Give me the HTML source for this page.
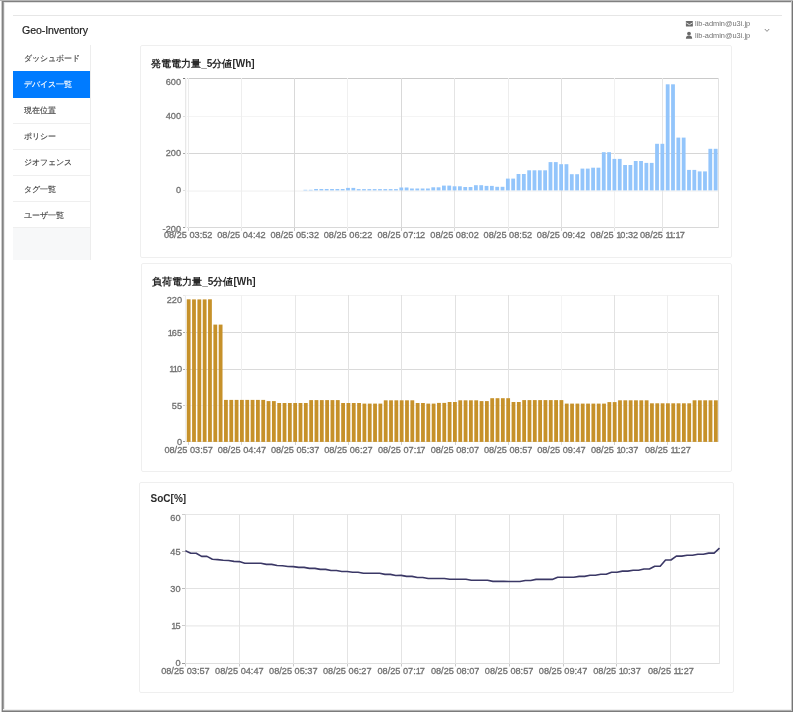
<!DOCTYPE html>
<html><head><meta charset="utf-8">
<style>
html,body{margin:0;padding:0;background:#fff;}
body{width:793px;height:712px;position:relative;overflow:hidden;font-family:"Liberation Sans", sans-serif;}
.gs{will-change:transform;}
.abs{position:absolute;}
.frame{position:absolute;left:1.5px;top:0;width:787.5px;height:708px;border:2px solid #7f7f7f;border-top-color:#8f8f8f;}
.hline{position:absolute;left:13px;top:15px;width:769px;height:1px;background:#e6e6e6;}
.brand{position:absolute;left:22px;top:24.2px;font-size:10.6px;color:#222;white-space:nowrap;letter-spacing:-0.1px;-webkit-text-stroke-width:0.2px;}
.side{position:absolute;left:13px;top:45px;width:77px;height:214.5px;border-right:1px solid #ededed;box-sizing:content-box;}
.sep{position:absolute;left:13px;width:77px;height:1px;background:#efefef;}
.act{position:absolute;left:13px;top:71px;width:77px;height:26.6px;background:#007bff;}
.fill{position:absolute;left:13px;top:228px;width:77px;height:31.5px;background:#f7f8f9;}
.it{position:absolute;left:24px;font-size:7.8px;color:#444;white-space:nowrap;line-height:10px;-webkit-text-stroke-width:0.15px;}
.card{position:absolute;border:1px solid #efefef;border-radius:2px;box-sizing:border-box;}
.title{position:absolute;font-size:10px;font-weight:bold;color:#2a2a2a;white-space:nowrap;letter-spacing:0.03px;}
.mail{position:absolute;left:695px;font-size:7.4px;color:#707070;white-space:nowrap;}
svg{position:absolute;left:0;top:0;}
svg text{font-family:"Liberation Sans", sans-serif;stroke:#707070;stroke-width:0.3px;}
</style></head><body>
<div class="gs" style="position:absolute;left:0;top:0;width:793px;height:712px;">
<div class="abs" style="left:0;top:0;width:793px;height:1px;background:#b5b5b5"></div>
<div class="abs" style="left:1px;top:1px;width:792px;height:1px;background:#808080"></div>
<div class="abs" style="left:3px;top:2px;width:788px;height:1px;background:#e2e2e2"></div>
<div class="abs" style="left:1px;top:1px;width:1px;height:711px;background:#cccccc"></div>
<div class="abs" style="left:2px;top:1px;width:1px;height:711px;background:#828282"></div>
<div class="abs" style="left:3px;top:2px;width:1px;height:709px;background:#a0a0a0"></div>
<div class="abs" style="left:4px;top:3px;width:1px;height:707px;background:#ececec"></div>
<div class="abs" style="left:791px;top:1px;width:1px;height:711px;background:#c4c4c4"></div>
<div class="abs" style="left:792px;top:1px;width:1px;height:711px;background:#767676"></div>
<div class="abs" style="left:3px;top:709px;width:788px;height:1px;background:#f0f0f0"></div>
<div class="abs" style="left:3px;top:710px;width:788px;height:1px;background:#b0b0b0"></div>
<div class="abs" style="left:2px;top:711px;width:791px;height:1px;background:#7c7c7c"></div>
<div class="hline"></div>
<div class="brand">Geo-Inventory</div>

<div class="mail" style="top:19.1px">lib-admin@u3i.jp</div>
<div class="mail" style="top:31.1px">lib-admin@u3i.jp</div>
<svg width="793" height="712" style="pointer-events:none">
<rect x="685.9" y="21" width="7" height="5.6" rx="0.6" fill="#6a6a6a"/>
<path d="M686.3 22.9 L689.4 24.7 L692.5 22.9" stroke="#fff" stroke-width="0.8" fill="none"/>
<circle cx="689" cy="33.6" r="1.9" fill="#6a6a6a"/>
<path d="M685.9 38.8 Q685.9 35.6 689 35.6 Q692.2 35.6 692.2 38.8 Z" fill="#6a6a6a"/>
<path d="M764.8 29 L767 31.4 L769.2 29" stroke="#8a8a8a" stroke-width="1" fill="none"/>
</svg>

<div class="side"></div>
<div class="sep" style="top:97.1px"></div>
<div class="sep" style="top:122.6px"></div>
<div class="sep" style="top:149.3px"></div>
<div class="sep" style="top:174.8px"></div>
<div class="sep" style="top:200.8px"></div>
<div class="sep" style="top:227.1px"></div>
<div class="act"></div>
<div class="fill"></div>
<div class="it" style="top:54px">ダッシュボード</div>
<div class="it" style="top:80.1px;color:#fff">デバイス一覧</div>
<div class="it" style="top:106.2px">現在位置</div>
<div class="it" style="top:132.3px">ポリシー</div>
<div class="it" style="top:158.4px">ジオフェンス</div>
<div class="it" style="top:184.5px">タグ一覧</div>
<div class="it" style="top:210.6px">ユーザ一覧</div>

<div class="card" style="left:140px;top:45px;width:592px;height:213px"></div>
<div class="card" style="left:141px;top:263px;width:591px;height:208.5px"></div>
<div class="card" style="left:139px;top:482px;width:595px;height:211px"></div>
<div class="title" style="left:151px;top:56.6px">発電電力量_5分値[Wh]</div>
<div class="title" style="left:152px;top:274.8px">負荷電力量_5分値[Wh]</div>
<div class="title" style="left:150.5px;top:493px">SoC[%]</div>

<svg width="793" height="712">
<rect x="185" y="78" width="534" height="1" fill="#cacaca"/>
<rect x="185" y="116" width="534" height="1" fill="#f4f4f4"/>
<rect x="185" y="153" width="534" height="1" fill="#d6d6d6"/>
<rect x="185" y="190" width="534" height="1" fill="#f8f8f8"/>
<rect x="185" y="191" width="534" height="1" fill="#f6f6f6"/>
<rect x="185" y="227" width="534" height="1" fill="#d8d8d8"/>
<rect x="185" y="78" width="1" height="150" fill="#e8e8e8"/>
<rect x="186" y="78" width="1" height="150" fill="#f8f8f8"/>
<rect x="188" y="78" width="1" height="150" fill="#ececec"/>
<rect x="241" y="78" width="1" height="150" fill="#eeeeee"/>
<rect x="294" y="78" width="1" height="150" fill="#d9d9d9"/>
<rect x="347" y="78" width="1" height="150" fill="#f0f0f0"/>
<rect x="401" y="78" width="1" height="150" fill="#d9d9d9"/>
<rect x="454" y="78" width="1" height="150" fill="#e4e4e4"/>
<rect x="508" y="78" width="1" height="150" fill="#ededed"/>
<rect x="561" y="78" width="1" height="150" fill="#e0e0e0"/>
<rect x="614" y="78" width="1" height="150" fill="#f1f1f1"/>
<rect x="662" y="78" width="1" height="150" fill="#e6e6e6"/>
<rect x="718" y="78" width="1" height="150" fill="#e2e2e2"/>
<rect x="183" y="78" width="2" height="1" fill="#777"/>
<rect x="183" y="116" width="2" height="1" fill="#ddd"/>
<rect x="183" y="153" width="2" height="1" fill="#aaa"/>
<rect x="183" y="190" width="2" height="1" fill="#ddd"/>
<rect x="183" y="227" width="2" height="1" fill="#999"/>
<rect x="188" y="228" width="1" height="3" fill="#d0d0d0"/>
<rect x="241" y="228" width="1" height="3" fill="#e0e0e0"/>
<rect x="294" y="228" width="1" height="3" fill="#c8c8c8"/>
<rect x="347" y="228" width="1" height="3" fill="#e0e0e0"/>
<rect x="401" y="228" width="1" height="3" fill="#c8c8c8"/>
<rect x="454" y="228" width="1" height="3" fill="#d8d8d8"/>
<rect x="508" y="228" width="1" height="3" fill="#e0e0e0"/>
<rect x="561" y="228" width="1" height="3" fill="#d0d0d0"/>
<rect x="614" y="228" width="1" height="3" fill="#e0e0e0"/>
<rect x="662" y="228" width="1" height="3" fill="#d8d8d8"/>
<text transform="translate(181 85.1) scale(1 1)" text-anchor="end" font-size="9.2" fill="#707070">600</text>
<text transform="translate(181 118.7) scale(1 1)" text-anchor="end" font-size="9.2" fill="#707070">400</text>
<text transform="translate(181 156.3) scale(1 1)" text-anchor="end" font-size="9.2" fill="#707070">200</text>
<text transform="translate(181 193.4) scale(1 1)" text-anchor="end" font-size="9.2" fill="#707070">0</text>
<text transform="translate(181 231.7) scale(1 1)" text-anchor="end" font-size="9.2" fill="#707070">-200</text>
<text transform="translate(188.16 238)" text-anchor="middle" font-size="9.2" fill="#707070">08/25 03:52</text>
<text transform="translate(241.44 238)" text-anchor="middle" font-size="9.2" fill="#707070">08/25 04:42</text>
<text transform="translate(294.72 238)" text-anchor="middle" font-size="9.2" fill="#707070">08/25 05:32</text>
<text transform="translate(348 238)" text-anchor="middle" font-size="9.2" fill="#707070">08/25 06:22</text>
<text transform="translate(401.28 238)" text-anchor="middle" font-size="9.2" fill="#707070">08/25 07:1<tspan dx="-1">2</tspan></text>
<text transform="translate(454.56 238)" text-anchor="middle" font-size="9.2" fill="#707070">08/25 08:02</text>
<text transform="translate(507.84 238)" text-anchor="middle" font-size="9.2" fill="#707070">08/25 08:52</text>
<text transform="translate(561.12 238)" text-anchor="middle" font-size="9.2" fill="#707070">08/25 09:42</text>
<text transform="translate(614.4 238)" text-anchor="middle" font-size="9.2" fill="#707070">08/25 1<tspan dx="-1">0</tspan>:32</text>
<text transform="translate(662.36 238)" text-anchor="middle" font-size="9.2" fill="#707070">08/25 1<tspan dx="-1">1</tspan><tspan dx="-1">:</tspan>1<tspan dx="-1">7</tspan></text>
<rect x="303.48" y="189.8" width="3.8" height="0.6" fill="#93c5fb"/>
<rect x="308.81" y="189.8" width="3.8" height="0.6" fill="#93c5fb"/>
<rect x="314.14" y="189" width="3.8" height="1.4" fill="#93c5fb"/>
<rect x="319.46" y="189" width="3.8" height="1.4" fill="#93c5fb"/>
<rect x="324.79" y="189" width="3.8" height="1.4" fill="#93c5fb"/>
<rect x="330.12" y="189" width="3.8" height="1.4" fill="#93c5fb"/>
<rect x="335.45" y="189" width="3.8" height="1.4" fill="#93c5fb"/>
<rect x="340.78" y="189" width="3.8" height="1.4" fill="#93c5fb"/>
<rect x="346.1" y="187.9" width="3.8" height="2.5" fill="#93c5fb"/>
<rect x="351.43" y="187.9" width="3.8" height="2.5" fill="#93c5fb"/>
<rect x="356.76" y="189.1" width="3.8" height="1.3" fill="#93c5fb"/>
<rect x="362.09" y="189.1" width="3.8" height="1.3" fill="#93c5fb"/>
<rect x="367.42" y="189.1" width="3.8" height="1.3" fill="#93c5fb"/>
<rect x="372.74" y="189.1" width="3.8" height="1.3" fill="#93c5fb"/>
<rect x="378.07" y="189.1" width="3.8" height="1.3" fill="#93c5fb"/>
<rect x="383.4" y="189.1" width="3.8" height="1.3" fill="#93c5fb"/>
<rect x="388.73" y="189.1" width="3.8" height="1.3" fill="#93c5fb"/>
<rect x="394.06" y="189.1" width="3.8" height="1.3" fill="#93c5fb"/>
<rect x="399.38" y="187.5" width="3.8" height="2.9" fill="#93c5fb"/>
<rect x="404.71" y="187.5" width="3.8" height="2.9" fill="#93c5fb"/>
<rect x="410.04" y="188.5" width="3.8" height="1.9" fill="#93c5fb"/>
<rect x="415.37" y="188.5" width="3.8" height="1.9" fill="#93c5fb"/>
<rect x="420.7" y="188.5" width="3.8" height="1.9" fill="#93c5fb"/>
<rect x="426.02" y="188.5" width="3.8" height="1.9" fill="#93c5fb"/>
<rect x="431.35" y="187.3" width="3.8" height="3.1" fill="#93c5fb"/>
<rect x="436.68" y="187.3" width="3.8" height="3.1" fill="#93c5fb"/>
<rect x="442.01" y="185.6" width="3.8" height="4.8" fill="#93c5fb"/>
<rect x="447.34" y="185.6" width="3.8" height="4.8" fill="#93c5fb"/>
<rect x="452.66" y="186.3" width="3.8" height="4.1" fill="#93c5fb"/>
<rect x="457.99" y="186.3" width="3.8" height="4.1" fill="#93c5fb"/>
<rect x="463.32" y="187" width="3.8" height="3.4" fill="#93c5fb"/>
<rect x="468.65" y="187" width="3.8" height="3.4" fill="#93c5fb"/>
<rect x="473.98" y="185.2" width="3.8" height="5.2" fill="#93c5fb"/>
<rect x="479.3" y="185.2" width="3.8" height="5.2" fill="#93c5fb"/>
<rect x="484.63" y="185.9" width="3.8" height="4.5" fill="#93c5fb"/>
<rect x="489.96" y="185.9" width="3.8" height="4.5" fill="#93c5fb"/>
<rect x="495.29" y="186.8" width="3.8" height="3.6" fill="#93c5fb"/>
<rect x="500.62" y="186.8" width="3.8" height="3.6" fill="#93c5fb"/>
<rect x="505.94" y="178.6" width="3.8" height="11.8" fill="#93c5fb"/>
<rect x="511.27" y="178.6" width="3.8" height="11.8" fill="#93c5fb"/>
<rect x="516.6" y="174" width="3.8" height="16.4" fill="#93c5fb"/>
<rect x="521.93" y="174" width="3.8" height="16.4" fill="#93c5fb"/>
<rect x="527.26" y="170.3" width="3.8" height="20.1" fill="#93c5fb"/>
<rect x="532.58" y="170.3" width="3.8" height="20.1" fill="#93c5fb"/>
<rect x="537.91" y="170.3" width="3.8" height="20.1" fill="#93c5fb"/>
<rect x="543.24" y="170.3" width="3.8" height="20.1" fill="#93c5fb"/>
<rect x="548.57" y="162.1" width="3.8" height="28.3" fill="#93c5fb"/>
<rect x="553.9" y="162.1" width="3.8" height="28.3" fill="#93c5fb"/>
<rect x="559.22" y="164.2" width="3.8" height="26.2" fill="#93c5fb"/>
<rect x="564.55" y="164.2" width="3.8" height="26.2" fill="#93c5fb"/>
<rect x="569.88" y="174.2" width="3.8" height="16.2" fill="#93c5fb"/>
<rect x="575.21" y="174.2" width="3.8" height="16.2" fill="#93c5fb"/>
<rect x="580.54" y="168.6" width="3.8" height="21.8" fill="#93c5fb"/>
<rect x="585.86" y="168.6" width="3.8" height="21.8" fill="#93c5fb"/>
<rect x="591.19" y="167.7" width="3.8" height="22.7" fill="#93c5fb"/>
<rect x="596.52" y="167.7" width="3.8" height="22.7" fill="#93c5fb"/>
<rect x="601.85" y="152.2" width="3.8" height="38.2" fill="#93c5fb"/>
<rect x="607.18" y="152.2" width="3.8" height="38.2" fill="#93c5fb"/>
<rect x="612.5" y="158.9" width="3.8" height="31.5" fill="#93c5fb"/>
<rect x="617.83" y="158.9" width="3.8" height="31.5" fill="#93c5fb"/>
<rect x="623.16" y="165" width="3.8" height="25.4" fill="#93c5fb"/>
<rect x="628.49" y="165" width="3.8" height="25.4" fill="#93c5fb"/>
<rect x="633.82" y="161" width="3.8" height="29.4" fill="#93c5fb"/>
<rect x="639.14" y="161" width="3.8" height="29.4" fill="#93c5fb"/>
<rect x="644.47" y="162.9" width="3.8" height="27.5" fill="#93c5fb"/>
<rect x="649.8" y="162.9" width="3.8" height="27.5" fill="#93c5fb"/>
<rect x="655.13" y="143.8" width="3.8" height="46.6" fill="#93c5fb"/>
<rect x="660.46" y="143.8" width="3.8" height="46.6" fill="#93c5fb"/>
<rect x="665.78" y="84.3" width="3.8" height="106.1" fill="#93c5fb"/>
<rect x="671.11" y="84.3" width="3.8" height="106.1" fill="#93c5fb"/>
<rect x="676.44" y="137.6" width="3.8" height="52.8" fill="#93c5fb"/>
<rect x="681.77" y="137.6" width="3.8" height="52.8" fill="#93c5fb"/>
<rect x="687.1" y="169.9" width="3.8" height="20.5" fill="#93c5fb"/>
<rect x="692.42" y="169.9" width="3.8" height="20.5" fill="#93c5fb"/>
<rect x="697.75" y="171.4" width="3.8" height="19" fill="#93c5fb"/>
<rect x="703.08" y="171.4" width="3.8" height="19" fill="#93c5fb"/>
<rect x="708.41" y="148.8" width="3.8" height="41.6" fill="#93c5fb"/>
<rect x="713.74" y="148.8" width="3.8" height="41.6" fill="#93c5fb"/>
<rect x="186" y="295" width="533" height="1" fill="#f2f2f2"/>
<rect x="186" y="332" width="533" height="1" fill="#d9d9d9"/>
<rect x="186" y="369" width="533" height="1" fill="#dadada"/>
<rect x="186" y="405" width="533" height="1" fill="#f3f3f3"/>
<rect x="186" y="441" width="533" height="1" fill="#e4e4e4"/>
<rect x="185" y="295" width="1" height="147" fill="#eeeeee"/>
<rect x="241" y="295" width="1" height="147" fill="#f0f0f0"/>
<rect x="295" y="295" width="1" height="147" fill="#e8e8e8"/>
<rect x="348" y="295" width="1" height="147" fill="#e2e2e2"/>
<rect x="401" y="295" width="1" height="147" fill="#e2e2e2"/>
<rect x="455" y="295" width="1" height="147" fill="#e2e2e2"/>
<rect x="508" y="295" width="1" height="147" fill="#e2e2e2"/>
<rect x="561" y="295" width="1" height="147" fill="#f4f4f4"/>
<rect x="614" y="295" width="1" height="147" fill="#e2e2e2"/>
<rect x="667" y="295" width="1" height="147" fill="#eeeeee"/>
<rect x="718" y="295" width="1" height="147" fill="#e2e2e2"/>
<rect x="183" y="295" width="2" height="1" fill="#e8e8e8"/>
<rect x="183" y="332" width="2" height="1" fill="#aaa"/>
<rect x="183" y="369" width="2" height="1" fill="#aaa"/>
<rect x="183" y="405" width="2" height="1" fill="#ccc"/>
<rect x="183" y="441" width="2" height="1" fill="#999"/>
<rect x="188" y="442" width="1" height="3" fill="#d0d0d0"/>
<rect x="241" y="442" width="1" height="3" fill="#d8d8d8"/>
<rect x="295" y="442" width="1" height="3" fill="#d0d0d0"/>
<rect x="348" y="442" width="1" height="3" fill="#d0d0d0"/>
<rect x="401" y="442" width="1" height="3" fill="#d0d0d0"/>
<rect x="455" y="442" width="1" height="3" fill="#d0d0d0"/>
<rect x="508" y="442" width="1" height="3" fill="#d0d0d0"/>
<rect x="561" y="442" width="1" height="3" fill="#e0e0e0"/>
<rect x="614" y="442" width="1" height="3" fill="#d0d0d0"/>
<rect x="667" y="442" width="1" height="3" fill="#d8d8d8"/>
<text transform="translate(182 303.2) scale(1 1)" text-anchor="end" font-size="9.2" fill="#707070">220</text>
<text transform="translate(182 335.9) scale(1 1)" text-anchor="end" font-size="9.2" fill="#707070">1<tspan dx="-1">6</tspan>5</text>
<text transform="translate(182 371.8) scale(1 1)" text-anchor="end" font-size="9.2" fill="#707070">1<tspan dx="-1">1</tspan><tspan dx="-1">0</tspan></text>
<text transform="translate(182 408.5) scale(1 1)" text-anchor="end" font-size="9.2" fill="#707070">55</text>
<text transform="translate(182 444.7) scale(1 1)" text-anchor="end" font-size="9.2" fill="#707070">0</text>
<text transform="translate(188.66 453.3)" text-anchor="middle" font-size="9.2" fill="#707070">08/25 03:57</text>
<text transform="translate(241.91 453.3)" text-anchor="middle" font-size="9.2" fill="#707070">08/25 04:47</text>
<text transform="translate(295.16 453.3)" text-anchor="middle" font-size="9.2" fill="#707070">08/25 05:37</text>
<text transform="translate(348.41 453.3)" text-anchor="middle" font-size="9.2" fill="#707070">08/25 06:27</text>
<text transform="translate(401.66 453.3)" text-anchor="middle" font-size="9.2" fill="#707070">08/25 07:1<tspan dx="-1">7</tspan></text>
<text transform="translate(454.91 453.3)" text-anchor="middle" font-size="9.2" fill="#707070">08/25 08:07</text>
<text transform="translate(508.16 453.3)" text-anchor="middle" font-size="9.2" fill="#707070">08/25 08:57</text>
<text transform="translate(561.41 453.3)" text-anchor="middle" font-size="9.2" fill="#707070">08/25 09:47</text>
<text transform="translate(614.66 453.3)" text-anchor="middle" font-size="9.2" fill="#707070">08/25 1<tspan dx="-1">0</tspan>:37</text>
<text transform="translate(667.91 453.3)" text-anchor="middle" font-size="9.2" fill="#707070">08/25 1<tspan dx="-1">1</tspan><tspan dx="-1">:</tspan>27</text>
<rect x="186.76" y="299.3" width="3.8" height="142.6" fill="#c6912a"/>
<rect x="192.09" y="299.4" width="3.8" height="142.5" fill="#c6912a"/>
<rect x="197.41" y="299.4" width="3.8" height="142.5" fill="#c6912a"/>
<rect x="202.74" y="299.4" width="3.8" height="142.5" fill="#c6912a"/>
<rect x="208.06" y="299.3" width="3.8" height="142.6" fill="#c6912a"/>
<rect x="213.39" y="324.6" width="3.8" height="117.3" fill="#c6912a"/>
<rect x="218.71" y="324.6" width="3.8" height="117.3" fill="#c6912a"/>
<rect x="224.04" y="399.9" width="3.8" height="42" fill="#c6912a"/>
<rect x="229.36" y="399.9" width="3.8" height="42" fill="#c6912a"/>
<rect x="234.69" y="399.9" width="3.8" height="42" fill="#c6912a"/>
<rect x="240.01" y="399.9" width="3.8" height="42" fill="#c6912a"/>
<rect x="245.34" y="399.9" width="3.8" height="42" fill="#c6912a"/>
<rect x="250.66" y="399.9" width="3.8" height="42" fill="#c6912a"/>
<rect x="255.99" y="399.9" width="3.8" height="42" fill="#c6912a"/>
<rect x="261.31" y="399.9" width="3.8" height="42" fill="#c6912a"/>
<rect x="266.64" y="401.1" width="3.8" height="40.8" fill="#c6912a"/>
<rect x="271.96" y="401.1" width="3.8" height="40.8" fill="#c6912a"/>
<rect x="277.29" y="403" width="3.8" height="38.9" fill="#c6912a"/>
<rect x="282.61" y="403" width="3.8" height="38.9" fill="#c6912a"/>
<rect x="287.94" y="403" width="3.8" height="38.9" fill="#c6912a"/>
<rect x="293.26" y="403" width="3.8" height="38.9" fill="#c6912a"/>
<rect x="298.59" y="403" width="3.8" height="38.9" fill="#c6912a"/>
<rect x="303.91" y="403" width="3.8" height="38.9" fill="#c6912a"/>
<rect x="309.24" y="400.1" width="3.8" height="41.8" fill="#c6912a"/>
<rect x="314.56" y="400.1" width="3.8" height="41.8" fill="#c6912a"/>
<rect x="319.89" y="400.1" width="3.8" height="41.8" fill="#c6912a"/>
<rect x="325.21" y="400.1" width="3.8" height="41.8" fill="#c6912a"/>
<rect x="330.54" y="400.1" width="3.8" height="41.8" fill="#c6912a"/>
<rect x="335.86" y="400.1" width="3.8" height="41.8" fill="#c6912a"/>
<rect x="341.19" y="403" width="3.8" height="38.9" fill="#c6912a"/>
<rect x="346.51" y="403" width="3.8" height="38.9" fill="#c6912a"/>
<rect x="351.84" y="403" width="3.8" height="38.9" fill="#c6912a"/>
<rect x="357.16" y="403" width="3.8" height="38.9" fill="#c6912a"/>
<rect x="362.49" y="403.6" width="3.8" height="38.3" fill="#c6912a"/>
<rect x="367.81" y="403.6" width="3.8" height="38.3" fill="#c6912a"/>
<rect x="373.14" y="403.6" width="3.8" height="38.3" fill="#c6912a"/>
<rect x="378.46" y="403.6" width="3.8" height="38.3" fill="#c6912a"/>
<rect x="383.79" y="400.3" width="3.8" height="41.6" fill="#c6912a"/>
<rect x="389.11" y="400.3" width="3.8" height="41.6" fill="#c6912a"/>
<rect x="394.44" y="400.3" width="3.8" height="41.6" fill="#c6912a"/>
<rect x="399.76" y="400.3" width="3.8" height="41.6" fill="#c6912a"/>
<rect x="405.09" y="400.3" width="3.8" height="41.6" fill="#c6912a"/>
<rect x="410.41" y="400.3" width="3.8" height="41.6" fill="#c6912a"/>
<rect x="415.74" y="403" width="3.8" height="38.9" fill="#c6912a"/>
<rect x="421.06" y="403" width="3.8" height="38.9" fill="#c6912a"/>
<rect x="426.39" y="403.6" width="3.8" height="38.3" fill="#c6912a"/>
<rect x="431.71" y="403.6" width="3.8" height="38.3" fill="#c6912a"/>
<rect x="437.04" y="402.9" width="3.8" height="39" fill="#c6912a"/>
<rect x="442.36" y="402.9" width="3.8" height="39" fill="#c6912a"/>
<rect x="447.69" y="402" width="3.8" height="39.9" fill="#c6912a"/>
<rect x="453.01" y="402" width="3.8" height="39.9" fill="#c6912a"/>
<rect x="458.34" y="400.3" width="3.8" height="41.6" fill="#c6912a"/>
<rect x="463.66" y="400.3" width="3.8" height="41.6" fill="#c6912a"/>
<rect x="468.99" y="400.3" width="3.8" height="41.6" fill="#c6912a"/>
<rect x="474.31" y="400.3" width="3.8" height="41.6" fill="#c6912a"/>
<rect x="479.64" y="401.1" width="3.8" height="40.8" fill="#c6912a"/>
<rect x="484.96" y="401.1" width="3.8" height="40.8" fill="#c6912a"/>
<rect x="490.29" y="398.2" width="3.8" height="43.7" fill="#c6912a"/>
<rect x="495.61" y="398.2" width="3.8" height="43.7" fill="#c6912a"/>
<rect x="500.94" y="398.2" width="3.8" height="43.7" fill="#c6912a"/>
<rect x="506.26" y="398.2" width="3.8" height="43.7" fill="#c6912a"/>
<rect x="511.59" y="402" width="3.8" height="39.9" fill="#c6912a"/>
<rect x="516.91" y="402" width="3.8" height="39.9" fill="#c6912a"/>
<rect x="522.24" y="400.1" width="3.8" height="41.8" fill="#c6912a"/>
<rect x="527.56" y="400.1" width="3.8" height="41.8" fill="#c6912a"/>
<rect x="532.89" y="400.1" width="3.8" height="41.8" fill="#c6912a"/>
<rect x="538.21" y="400.1" width="3.8" height="41.8" fill="#c6912a"/>
<rect x="543.54" y="400.1" width="3.8" height="41.8" fill="#c6912a"/>
<rect x="548.86" y="400.1" width="3.8" height="41.8" fill="#c6912a"/>
<rect x="554.19" y="400.1" width="3.8" height="41.8" fill="#c6912a"/>
<rect x="559.51" y="400.1" width="3.8" height="41.8" fill="#c6912a"/>
<rect x="564.84" y="403.6" width="3.8" height="38.3" fill="#c6912a"/>
<rect x="570.16" y="403.6" width="3.8" height="38.3" fill="#c6912a"/>
<rect x="575.49" y="403.6" width="3.8" height="38.3" fill="#c6912a"/>
<rect x="580.81" y="403.6" width="3.8" height="38.3" fill="#c6912a"/>
<rect x="586.14" y="403.6" width="3.8" height="38.3" fill="#c6912a"/>
<rect x="591.46" y="403.6" width="3.8" height="38.3" fill="#c6912a"/>
<rect x="596.79" y="403.6" width="3.8" height="38.3" fill="#c6912a"/>
<rect x="602.11" y="403.6" width="3.8" height="38.3" fill="#c6912a"/>
<rect x="607.44" y="402.1" width="3.8" height="39.8" fill="#c6912a"/>
<rect x="612.76" y="402.1" width="3.8" height="39.8" fill="#c6912a"/>
<rect x="618.09" y="400.3" width="3.8" height="41.6" fill="#c6912a"/>
<rect x="623.41" y="400.3" width="3.8" height="41.6" fill="#c6912a"/>
<rect x="628.74" y="400.3" width="3.8" height="41.6" fill="#c6912a"/>
<rect x="634.06" y="400.3" width="3.8" height="41.6" fill="#c6912a"/>
<rect x="639.39" y="400.3" width="3.8" height="41.6" fill="#c6912a"/>
<rect x="644.71" y="400.3" width="3.8" height="41.6" fill="#c6912a"/>
<rect x="650.04" y="403.3" width="3.8" height="38.6" fill="#c6912a"/>
<rect x="655.36" y="403.3" width="3.8" height="38.6" fill="#c6912a"/>
<rect x="660.69" y="403.3" width="3.8" height="38.6" fill="#c6912a"/>
<rect x="666.01" y="403.3" width="3.8" height="38.6" fill="#c6912a"/>
<rect x="671.34" y="403.3" width="3.8" height="38.6" fill="#c6912a"/>
<rect x="676.66" y="403.3" width="3.8" height="38.6" fill="#c6912a"/>
<rect x="681.99" y="403.3" width="3.8" height="38.6" fill="#c6912a"/>
<rect x="687.31" y="403.3" width="3.8" height="38.6" fill="#c6912a"/>
<rect x="692.64" y="400.3" width="3.8" height="41.6" fill="#c6912a"/>
<rect x="697.96" y="400.3" width="3.8" height="41.6" fill="#c6912a"/>
<rect x="703.29" y="400.3" width="3.8" height="41.6" fill="#c6912a"/>
<rect x="708.61" y="400.3" width="3.8" height="41.6" fill="#c6912a"/>
<rect x="713.94" y="400.3" width="3.8" height="41.6" fill="#c6912a"/>
<rect x="185" y="514" width="535" height="1" fill="#e6e6e6"/>
<rect x="185" y="551" width="535" height="1" fill="#e6e6e6"/>
<rect x="185" y="588" width="535" height="1" fill="#e2e2e2"/>
<rect x="185" y="625" width="535" height="1" fill="#efefef"/>
<rect x="185" y="626" width="535" height="1" fill="#f4f4f4"/>
<rect x="185" y="663" width="535" height="1" fill="#dedede"/>
<rect x="185" y="514" width="1" height="150" fill="#dcdcdc"/>
<rect x="239" y="514" width="1" height="150" fill="#e4e4e4"/>
<rect x="293" y="514" width="1" height="150" fill="#e4e4e4"/>
<rect x="347" y="514" width="1" height="150" fill="#e4e4e4"/>
<rect x="401" y="514" width="1" height="150" fill="#e4e4e4"/>
<rect x="455" y="514" width="1" height="150" fill="#e4e4e4"/>
<rect x="509" y="514" width="1" height="150" fill="#e4e4e4"/>
<rect x="563" y="514" width="1" height="150" fill="#e4e4e4"/>
<rect x="616" y="514" width="1" height="150" fill="#e4e4e4"/>
<rect x="670" y="514" width="1" height="150" fill="#e4e4e4"/>
<rect x="719" y="514" width="1" height="150" fill="#e4e4e4"/>
<rect x="182" y="514" width="3" height="1" fill="#ccc"/>
<rect x="182" y="551" width="3" height="1" fill="#bbb"/>
<rect x="182" y="588" width="3" height="1" fill="#bbb"/>
<rect x="182" y="625" width="3" height="1" fill="#ccc"/>
<rect x="182" y="663" width="3" height="1" fill="#999"/>
<rect x="185" y="664" width="1" height="2.5" fill="#c8c8c8"/>
<rect x="239" y="664" width="1" height="2.5" fill="#c8c8c8"/>
<rect x="293" y="664" width="1" height="2.5" fill="#c8c8c8"/>
<rect x="347" y="664" width="1" height="2.5" fill="#c8c8c8"/>
<rect x="401" y="664" width="1" height="2.5" fill="#c8c8c8"/>
<rect x="455" y="664" width="1" height="2.5" fill="#c8c8c8"/>
<rect x="509" y="664" width="1" height="2.5" fill="#c8c8c8"/>
<rect x="563" y="664" width="1" height="2.5" fill="#c8c8c8"/>
<rect x="616" y="664" width="1" height="2.5" fill="#c8c8c8"/>
<rect x="670" y="664" width="1" height="2.5" fill="#c8c8c8"/>
<text transform="translate(180.5 521.1) scale(1 1)" text-anchor="end" font-size="9.2" fill="#707070">60</text>
<text transform="translate(180.5 554.7) scale(1 1)" text-anchor="end" font-size="9.2" fill="#707070">45</text>
<text transform="translate(180.5 591.9) scale(1 1)" text-anchor="end" font-size="9.2" fill="#707070">30</text>
<text transform="translate(180.5 629.2) scale(1 1)" text-anchor="end" font-size="9.2" fill="#707070">1<tspan dx="-1">5</tspan></text>
<text transform="translate(180.5 666) scale(1 1)" text-anchor="end" font-size="9.2" fill="#707070">0</text>
<text transform="translate(185.4 673.8)" text-anchor="middle" font-size="9.2" fill="#707070">08/25 03:57</text>
<text transform="translate(239.35 673.8)" text-anchor="middle" font-size="9.2" fill="#707070">08/25 04:47</text>
<text transform="translate(293.3 673.8)" text-anchor="middle" font-size="9.2" fill="#707070">08/25 05:37</text>
<text transform="translate(347.25 673.8)" text-anchor="middle" font-size="9.2" fill="#707070">08/25 06:27</text>
<text transform="translate(401.2 673.8)" text-anchor="middle" font-size="9.2" fill="#707070">08/25 07:1<tspan dx="-1">7</tspan></text>
<text transform="translate(455.15 673.8)" text-anchor="middle" font-size="9.2" fill="#707070">08/25 08:07</text>
<text transform="translate(509.1 673.8)" text-anchor="middle" font-size="9.2" fill="#707070">08/25 08:57</text>
<text transform="translate(563.05 673.8)" text-anchor="middle" font-size="9.2" fill="#707070">08/25 09:47</text>
<text transform="translate(617 673.8)" text-anchor="middle" font-size="9.2" fill="#707070">08/25 1<tspan dx="-1">0</tspan>:37</text>
<text transform="translate(670.95 673.8)" text-anchor="middle" font-size="9.2" fill="#707070">08/25 1<tspan dx="-1">1</tspan><tspan dx="-1">:</tspan>27</text>
<polyline points="185.4,550.8 190.8,553.3 196.19,553.3 201.59,556.4 206.98,556.4 212.38,559.3 217.77,559.6 223.17,560.3 228.56,560.5 233.95,561.4 239.35,561.6 244.75,563.3 250.14,563.3 255.53,563.3 260.93,563.3 266.32,564.4 271.72,564.4 277.12,565.5 282.51,565.8 287.9,566.5 293.3,566.6 298.69,567.4 304.09,567.4 309.49,568.4 314.88,568.4 320.27,569.4 325.67,569.4 331.06,570.5 336.46,570.5 341.86,571.5 347.25,571.5 352.64,572.3 358.04,572.3 363.44,573.3 368.83,573.3 374.23,573.3 379.62,573.3 385.01,574.4 390.41,574.4 395.8,575.5 401.2,575.4 406.6,576.4 411.99,576.4 417.38,577.5 422.78,577.5 428.17,578.5 433.57,578.5 438.96,578.5 444.36,578.5 449.75,579.3 455.15,579.3 460.54,579.3 465.94,579.3 471.34,580.3 476.73,580.3 482.12,580.3 487.52,580.3 492.91,581.4 498.31,581.4 503.7,581.4 509.1,581.5 514.5,581.5 519.89,581.5 525.28,580.5 530.68,580.5 536.07,579.4 541.47,579.4 546.87,579.4 552.26,579.4 557.65,577.3 563.05,577.3 568.44,577.3 573.84,577.3 579.24,576.4 584.63,576.4 590.02,575.3 595.42,575.3 600.81,574.3 606.21,574.3 611.61,572.2 617,572.2 622.39,571.1 627.79,571.1 633.18,570.2 638.58,570.2 643.98,569 649.37,569 654.76,566.3 660.16,566.3 665.55,560 670.95,560 676.34,556.1 681.74,556.1 687.13,555.2 692.53,555.2 697.92,554.2 703.32,554.2 708.71,553.1 714.11,553.1 719.5,548.2" fill="none" stroke="#3b3866" stroke-width="1.6" stroke-linejoin="round"/>
</svg>
</div>
</body></html>
